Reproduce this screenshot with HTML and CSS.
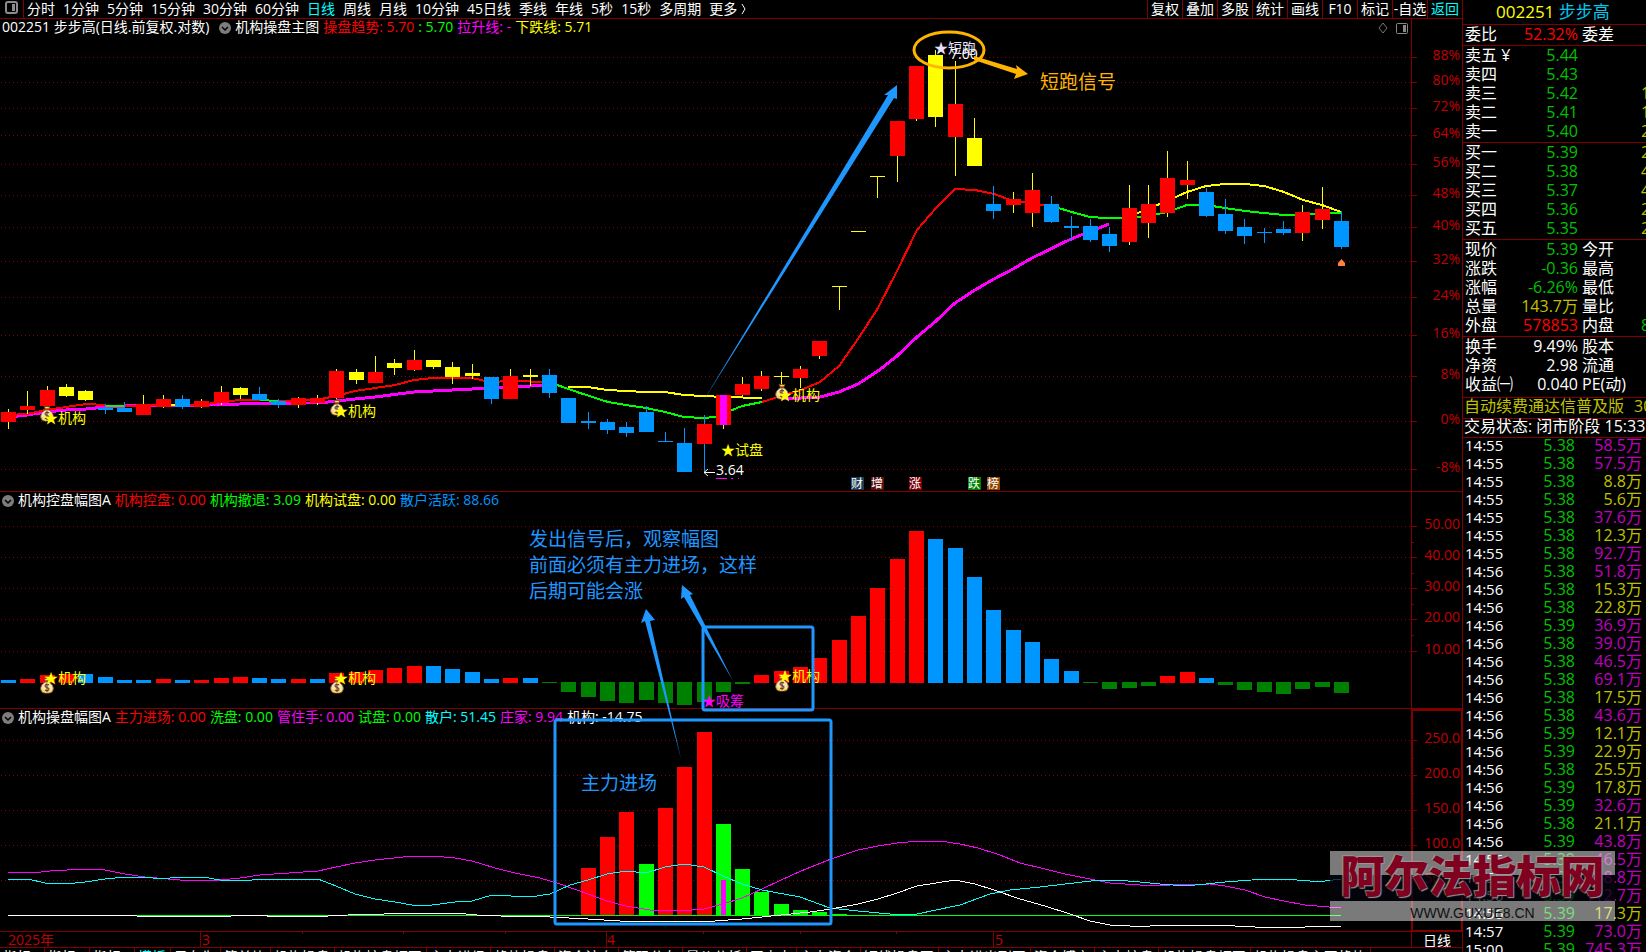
FILE: index.html
```
<!DOCTYPE html>
<html lang="zh-CN">
<head>
  <meta charset="UTF-8" />
  <meta name="viewport" content="width=device-width, initial-scale=1" />
  <title>002251 步步高 日线</title>
  <link rel="stylesheet" href="styles.css">
</head>
<body>
  <main class="left">
    <nav class="toolbar">
      <button type="button" class="layout-btn" aria-label="布局">
        <svg width="13" height="13" viewBox="0 0 13 13"><rect x="1" y="1" width="11" height="11" rx="2" fill="none" stroke="#8c8c8c" stroke-width="2"/><rect x="7" y="3" width="3" height="7" fill="#8c8c8c"/></svg>
      </button>
      <div class="periods">
        <button type="button">分时</button>
        <button type="button">1分钟</button>
        <button type="button">5分钟</button>
        <button type="button">15分钟</button>
        <button type="button">30分钟</button>
        <button type="button">60分钟</button>
        <button type="button" class="cyan">日线</button>
        <button type="button">周线</button>
        <button type="button">月线</button>
        <button type="button">10分钟</button>
        <button type="button">45日线</button>
        <button type="button">季线</button>
        <button type="button">年线</button>
        <button type="button">5秒</button>
        <button type="button">15秒</button>
        <button type="button">多周期</button>
        <button type="button" class="more">更多
          <svg width="6" height="12" viewBox="0 0 6 12"><path d="M1 1 L4 6 L1 11" fill="none" stroke="#fff"/></svg>
        </button>
      </div>
      <div class="tools">
        <button type="button">复权</button>
        <button type="button">叠加</button>
        <button type="button">多股</button>
        <button type="button">统计</button>
        <button type="button">画线</button>
        <button type="button">F10</button>
        <button type="button">标记</button>
        <button type="button">-自选</button>
        <button type="button" class="cyan">返回</button>
      </div>
    </nav>

    <div class="charts">
      <section class="panel">
        <div class="legend">
          <span>002251 步步高(日线.前复权.对数)</span>
          <svg class="chev first" viewBox="0 0 12 12"><circle cx="6" cy="6" r="6" fill="#7d7d7d"/><path d="M3 5 L6 8 L9 5" fill="none" stroke="#000" stroke-width="1.5"/></svg>
          <span>机构操盘主图</span>
          <span class="red">操盘趋势: 5.70</span>
          <span class="green">: 5.70</span>
          <span class="magenta">拉升线: -</span>
          <span class="yellow">下跌线: 5.71</span>
        </div>
        <svg class="plot" id="main" viewBox="0 37 1462 454"></svg>
      </section>

      <section class="panel">
        <div class="legend">
          <svg class="chev" viewBox="0 0 12 12"><circle cx="6" cy="6" r="6" fill="#7d7d7d"/><path d="M3 5 L6 8 L9 5" fill="none" stroke="#000" stroke-width="1.5"/></svg>
          <span>机构控盘幅图A</span>
          <span class="red">机构控盘: 0.00</span>
          <span class="green">机构撤退: 3.09</span>
          <span class="yellow">机构试盘: 0.00</span>
          <span class="blue">散户活跃: 88.66</span>
        </div>
        <svg class="plot" id="control" viewBox="0 510 1462 198"></svg>
      </section>

      <section class="panel">
        <div class="legend">
          <svg class="chev" viewBox="0 0 12 12"><circle cx="6" cy="6" r="6" fill="#7d7d7d"/><path d="M3 5 L6 8 L9 5" fill="none" stroke="#000" stroke-width="1.5"/></svg>
          <span>机构操盘幅图A</span>
          <span class="red">主力进场: 0.00</span>
          <span class="green">洗盘: 0.00</span>
          <span class="magenta">管住手: 0.00</span>
          <span class="green">试盘: 0.00</span>
          <span class="aqua">散户: 51.45</span>
          <span class="magenta">庄家: 9.94</span>
          <span>机构: -14.75</span>
        </div>
        <svg class="plot" id="operate" viewBox="0 727 1462 204"></svg>
      </section>

      <!-- drawings that cross the panels -->
      <svg class="overlay" viewBox="0 19 1462 913">
        <defs>
          <symbol id="bag" viewBox="0 0 14 17">
            <path d="M4 1 L6 2 L7 1 L8 2 L10 1 L9 4 H5 Z" fill="#ffe640" stroke="#6b3a20" stroke-width=".7"/>
            <path d="M5 5 H9 C12 7 14 10 13 13 C12 16 10 16 7 16 C4 16 2 16 1 13 C0 10 2 7 5 5 Z" fill="#f5e6b0" stroke="#8a5a3c"/>
            <path d="M2 12 C3 15 6 16 11 14" fill="none" stroke="#ffd830" stroke-width="1.5"/>
            <path d="M9 8 C8 7 5 7 5 9 C5 11 9 10 9 12 C9 14 6 14 5 13 M7 6 V15" fill="none" stroke="#6b3a30" stroke-width="1.1"/>
            <path d="M5 4 H9" stroke="#b04030" stroke-width="1.2"/>
          </symbol>
        </defs>
        <path class="frame" d="M1411.5 19 V932"/>
        <rect x="1412" y="710" width="50" height="221" fill="none" stroke="#800000" stroke-width="2"/>
        <path d="M1383 23 L1387 28 L1383 33 L1379 28 Z" fill="none" stroke="#777"/>
        <rect x="1396.500" y="23.500" width="11" height="10" rx="1" fill="none" stroke="#888"/>
        <rect x="1403" y="25" width="3" height="7" fill="#888"/>

        <use href="#bag" x="40" y="405" width="14" height="17"/>
        <use href="#bag" x="330" y="399" width="14" height="17"/>
        <use href="#bag" x="775" y="383" width="14" height="17"/>
        <use href="#bag" x="40" y="677" width="14" height="17"/>
        <use href="#bag" x="330" y="677" width="14" height="17"/>
        <use href="#bag" x="775" y="675" width="14" height="17"/>
        <g class="mark yellow">
          <text x="44" y="423">★机构</text>
          <text x="334" y="416">★机构</text>
          <text x="778" y="400">★机构</text>
          <text x="721" y="455">★试盘</text>
          <text x="44" y="683">★机构</text>
          <text x="334" y="683">★机构</text>
          <text x="778" y="681">★机构</text>
        </g>
        <text class="mark magenta" x="702" y="706">★吸筹</text>
        <text class="mark lilac" x="934" y="53">★短跑</text>
        <text class="mark white" x="950" y="59">7.00</text>
        <path d="M704 472.500 H715 M708 469 L704 472.500 L708 476" fill="none" stroke="#fff"/>
        <text class="mark white" x="716" y="475">3.64</text>
        <path d="M716 478.500 H727 M731 478.500 H733 M738 478.500 H739" stroke="#f0f"/>

        <ellipse cx="949" cy="50" rx="35" ry="18" fill="none" stroke="#ffb400" stroke-width="3"/>
        <path d="M974 56 L1017 69 L1016 65 L1028 74 L1014 79 L1016 74 L974 60 Z" fill="#ffb400"/>
        <text class="note orange" x="1040" y="89">短跑信号</text>

        <g fill="#1f97ff">
          <path d="M702 403 L888 95 L884 95 L897 85 L897 99 L894 98 Z"/>
          <path d="M733 681 L684 597 L681 599 L682 585 L693 594 L690 595 Z"/>
          <path d="M681 759 L645 621 L641 623 L646 609 L655 620 L650 621 Z"/>
        </g>
        <g fill="none" stroke="#1f97ff" stroke-width="3">
          <rect x="703" y="627" width="110" height="83" rx="2"/>
          <rect x="555" y="720" width="276" height="204" rx="2"/>
        </g>
        <g class="note sky">
          <text x="529" y="546">发出信号后，观察幅图</text>
          <text x="529" y="572">前面必须有主力进场，这样</text>
          <text x="529" y="598">后期可能会涨</text>
          <text x="581" y="790">主力进场</text>
        </g>
      </svg>
    </div>

    <svg class="dates" viewBox="0 932 1462 15">
      <path class="frame" d="M200.500 932 V947 M606.500 932 V947 M993.500 932 V947 M1411.500 932 V947 M302.500 932 V934 M403.500 932 V934 M505.500 932 V934 M703.500 932 V934 M800.500 932 V934 M896.500 932 V934"/>
      <g class="axis">
        <text x="8" y="945">2025年</text>
        <text x="202" y="945">3</text>
        <text x="607" y="945">4</text>
        <text x="995" y="945">5</text>
      </g>
      <text class="period" x="1423" y="946">日线</text>
    </svg>

    <nav class="tabs">
      <button type="button">指标A</button>
      <button type="button">指标B</button>
      <button type="button">指标C</button>
      <button type="button" class="cyan">模板</button>
      <button type="button">另存为</button>
      <button type="button">简单均</button>
      <button type="button">机构操盘</button>
      <button type="button">机构控盘幅图</button>
      <button type="button">主力进场</button>
      <button type="button">趋势操盘</button>
      <button type="button">资金流向</button>
      <button type="button">筹码分布</button>
      <button type="button">量价分析</button>
      <button type="button">买卖点</button>
      <button type="button">主力资金</button>
      <button type="button">短线操盘图</button>
      <button type="button">主力进出副图</button>
      <button type="button">资金博弈</button>
      <button type="button">主力控盘</button>
      <button type="button">机构操盘幅图</button>
      <button type="button">机构操盘主图趋势</button>
    </nav>
  </main>

  <aside class="side">
    <h1><span class="yellow">002251</span> <a href="#">步步高</a></h1>
    <table class="quote">
      <colgroup><col class="c1"><col class="c2"><col class="c3"><col class="c4"></colgroup>
      <tbody>
        <tr><th>委比</th><td class="up">52.32%</td><th>委差</th><td></td></tr>
      </tbody>
      <tbody>
        <tr><th>卖五 ¥</th><td>5.44</td><th></th><td></td></tr>
        <tr><th>卖四</th><td>5.43</td><th></th><td></td></tr>
        <tr><th>卖三</th><td>5.42</td><th></th><td class="gold">1</td></tr>
        <tr><th>卖二</th><td>5.41</td><th></th><td class="gold">1</td></tr>
        <tr><th>卖一</th><td>5.40</td><th></th><td class="gold">2</td></tr>
      </tbody>
      <tbody>
        <tr><th>买一</th><td>5.39</td><th></th><td class="gold">2</td></tr>
        <tr><th>买二</th><td>5.38</td><th></th><td class="gold">4</td></tr>
        <tr><th>买三</th><td>5.37</td><th></th><td class="gold">4</td></tr>
        <tr><th>买四</th><td>5.36</td><th></th><td class="gold">2</td></tr>
        <tr><th>买五</th><td>5.35</td><th></th><td class="gold">2</td></tr>
      </tbody>
      <tbody>
        <tr><th>现价</th><td>5.39</td><th>今开</th><td></td></tr>
        <tr><th>涨跌</th><td>-0.36</td><th>最高</th><td></td></tr>
        <tr><th>涨幅</th><td>-6.26%</td><th>最低</th><td></td></tr>
        <tr><th>总量</th><td class="gold">143.7万</td><th>量比</th><td></td></tr>
        <tr><th>外盘</th><td class="up">578853</td><th>内盘</th><td>8</td></tr>
      </tbody>
      <tbody class="last">
        <tr><th>换手</th><td class="flat">9.49%</td><th>股本</th><td></td></tr>
        <tr><th>净资</th><td class="flat">2.98</td><th>流通</th><td></td></tr>
        <tr><th>收益㈠</th><td class="flat">0.040</td><th>PE(动)</th><td></td></tr>
      </tbody>
    </table>
    <p class="notice gold"><span>自动续费通达信普及版</span><span>30</span></p>
    <p class="status">交易状态: 闭市阶段 15:33</p>
    <table class="ticks"><tbody id="ticks"></tbody></table>
  </aside>

  <div class="watermark">
    <strong>阿尔法指标网</strong>
    <span>WWW.GUXUE8.CN</span>
  </div>

  <script src="script.js"></script>
</body>
</html>
```

FILE: styles.css
```
body {
  margin: 0;
  height: 100vh;
  display: flex;
  overflow: hidden;
  position: relative;
  background: #000;
  color: #fff;
  font-family: "Open Sans", "Noto Sans CJK SC", sans-serif;
  font-size: 14px;
}
button {
  background: none;
  border: 0;
  padding: 0;
  color: inherit;
  font: inherit;
  white-space: nowrap;
  cursor: pointer;
}
.red { color: #f00; fill: #f00; }
.green { color: #0f0; fill: #0f0; }
.magenta { color: #f0f; fill: #f0f; }
.yellow { color: #ff0; fill: #ff0; }
.blue { color: #0096ff; }
.aqua, .cyan { color: #0ff; }
.gold { color: #c0c000; }

.left {
  flex: 1;
  min-width: 0;
  display: flex;
  flex-direction: column;
  overflow: hidden;
}
.toolbar {
  display: flex;
  height: 18px;
  line-height: 18px;
  border-bottom: 1px solid #800000;
  flex: none;
}
.layout-btn {
  width: 24px;
  border-right: 1px solid #800000;
  display: flex;
  justify-content: center;
  padding-top: 1px;
  box-sizing: border-box;
}
.periods {
  display: flex;
  gap: 8px;
  padding-left: 3px;
  flex: 1;
}
.more {
  display: flex;
  align-items: center;
  gap: 4px;
}
.tools {
  display: flex;
}
.tools button {
  width: 35px;
  border-left: 1px solid #800000;
  box-sizing: border-box;
}

.charts {
  position: relative;
  flex: none;
}
.panel {
  border-bottom: 1px solid #800000;
}
.legend {
  display: flex;
  gap: 4px;
  height: 18px;
  line-height: 16px;
  padding-left: 2px;
  white-space: nowrap;
}
.chev {
  width: 12px;
  height: 12px;
  margin-top: 3px;
}
.chev.first {
  margin-left: 6px;
}
.plot, .dates {
  display: block;
  width: 100%;
}
.overlay {
  position: absolute;
  top: 0;
  left: 0;
  width: 100%;
  pointer-events: none;
}
.frame {
  fill: none;
  stroke: #800000;
  shape-rendering: crispEdges;
}
.grid {
  fill: none;
  stroke: #8c0000;
  stroke-dasharray: 1 3;
  shape-rendering: crispEdges;
}
.crisp {
  shape-rendering: crispEdges;
}
.curve {
  fill: none;
  stroke-linejoin: round;
}
.axis {
  fill: #c00000;
  font-size: 14px;
}
.axis.right {
  text-anchor: end;
}
.mark {
  font-size: 14px;
}
.tag {
  font-size: 12px;
  fill: #fff;
  text-anchor: middle;
}
.white, .period { fill: #fff; }
.lilac { fill: #e6e0ff; }
.note { font-size: 19px; }
.orange { fill: #ffb400; }
.sky { fill: #1f97ff; }
.period { font-size: 14px; }

.dates {
  flex: none;
  border-bottom: 1px solid #800000;
}
.tabs {
  display: flex;
  height: 18px;
  line-height: 16px;
  flex: none;
}
.tabs button {
  padding: 0 4px 0 3px;
  border-right: 1px solid #800000;
}

.side {
  width: 183px;
  flex: none;
  overflow: hidden;
  border-left: 1px solid #800000;
  font-size: 16px;
}
.side h1 {
  margin: 0;
  height: 24px;
  line-height: 24px;
  padding-left: 33px;
  font-size: 17px;
  font-weight: normal;
  border-bottom: 1px solid #800000;
  white-space: nowrap;
}
.side a {
  color: #00c8f0;
  text-decoration: none;
}
table {
  border-collapse: separate;
  border-spacing: 0;
  table-layout: fixed;
}
th, td {
  padding: 0;
  font-weight: normal;
  white-space: nowrap;
}
.quote {
  width: 240px;
}
.c1 { width: 51px; }
.c2 { width: 64px; }
.c3 { width: 63px; }
.c4 { width: 62px; }
.quote th {
  text-align: left;
  padding-left: 2px;
  height: 19px;
  line-height: 19px;
}
.quote th:nth-child(3) {
  padding-left: 4px;
}
.quote td {
  color: #00c000;
  line-height: 19px;
  text-align: right;
}
.quote td:last-child {
  text-align: left;
}
.quote tr:last-child th,
.quote tr:last-child td {
  padding-bottom: 1px;
  border-bottom: 1px solid #800000;
}
.quote tbody:first-child tr:last-child th,
.quote tbody:first-child tr:last-child td {
  padding-bottom: 0;
}
.quote tbody.last tr:last-child th,
.quote tbody.last tr:last-child td {
  padding-bottom: 3px;
}
.quote .up { color: #f00; }
.quote .gold { color: #c0c000; }
.quote .flat { color: #fff; }
.notice, .status {
  margin: 0;
  height: 20px;
  line-height: 17px;
  padding-left: 1px;
  border-bottom: 1px solid #800000;
  white-space: nowrap;
  display: flex;
  gap: 10px;
}
.status {
  height: 18px;
  line-height: 15px;
}
.ticks {
  width: 179px;
}
.ticks td {
  height: 18px;
  line-height: 15px;
  vertical-align: top;
  text-align: right;
}
.ticks td:first-child {
  width: 49px;
  font-size: 15px;
  text-align: left;
  padding-left: 2px;
}
.ticks td:nth-child(2) {
  width: 61px;
  color: #00c000;
}
.ticks .big { color: #c000c0; }
.ticks .small { color: #c0c000; }

.watermark {
  position: absolute;
  right: 31px;
  bottom: 31px;
  width: 285px;
  height: 70px;
  background: linear-gradient(rgba(255,255,255,0.48) 24px, rgba(4,4,14,0.75) 24px, rgba(4,4,14,0.75) 50px, rgba(255,255,255,0.48) 50px);
  display: flex;
  flex-direction: column;
  align-items: center;
}
.watermark strong {
  font-family: "Noto Sans CJK SC", sans-serif;
  font-size: 44px;
  line-height: 46px;
  font-weight: 900;
  color: #80001f;
  text-shadow: 1px 1px 1px #999, -1px -1px 1px #999;
}
.watermark span {
  font-family: "Liberation Sans", sans-serif;
  font-size: 14px;
  line-height: 32px;
  color: #111;
}
```

FILE: script.js
```
const NS = 'http://www.w3.org/2000/svg';
const RED = '#f00', YEL = '#ff0', BLU = '#0096ff', GRN = '#0f0', DGR = '#008000', MAG = '#f0f';
const colors = { r: RED, y: YEL, b: BLU, g: GRN, d: DGR };

function add(parent, tag, attrs, text) {
  const el = document.createElementNS(NS, tag);
  for (const key in attrs) el.setAttribute(key, attrs[key]);
  if (text) el.textContent = text;
  parent.appendChild(el);
  return el;
}

// centre of the n-th trading day
const cx = i => Math.round(8 + i * 19.32);

function grid(svg, rows) {
  rows.forEach(([y, label]) => {
    add(svg, 'path', { class: 'grid', d: `M1 ${y}.5 H1411` });
    add(svg, 'path', { class: 'frame', d: `M1411 ${y}.5 H1417` });
    add(svg, 'text', { class: 'axis right', x: 1460, y: y + 3 }, label);
  });
}

function halfTicks(svg, ys) {
  ys.forEach(y => add(svg, 'path', { class: 'frame', d: `M1411 ${y}.5 H1414` }));
}

function curve(svg, color, width, points) {
  add(svg, 'polyline', { class: 'curve crisp', stroke: color, 'stroke-width': width, points });
}

const main = document.getElementById('main');
grid(main, [
  [57, '88%'], [82, '80%'], [108, '72%'], [135, '64%'], [164, '56%'], [195, '48%'], [227, '40%'],
  [261, '32%'], [297, '24%'], [335, '16%'], [376, '8%'], [421, '0%'], [469, '-8%']
]);

curve(main, YEL, 2, '568,387 588,387 607,390 646,392 665,392 684,395 704,396 723,397 762,398');
curve(main, YEL, 2, '1129,218 1140,212 1167,201 1187,192 1206,186 1225,184 1245,184 1264,186 1284,192 1303,200 1322,205 1341,212');
curve(main, MAG, 3, '8,417 27,415 46,412 66,410 86,409 105,407 124,406 143,405 200,405 240,404 300,403 320,403 336,401 375,397 414,392 433,391 472,389 510,387 550,385');
curve(main, MAG, 3, '781,398 801,398 820,397 839,392 858,384 878,371 897,356 917,337 936,321 955,303 975,290 994,279 1013,269 1032,258 1071,239 1109,224');
curve(main, RED, 2, '8,415 27,414 46,410 66,407 86,404 105,405');
curve(main, GRN, 2, '105,406 124,406');
curve(main, RED, 2, '124,406 162,405');
curve(main, YEL, 2, '162,405 178,405');
curve(main, RED, 2, '178,405 200,405 220,402 240,400 260,400');
curve(main, GRN, 2, '260,400 278,401');
curve(main, RED, 2, '278,401 316,400 336,396 355,391 375,388 395,385 414,380 433,378 472,378 490,382 510,381 549,382');
curve(main, GRN, 2, '549,383 557,385 580,393 608,402 626,405 646,408 665,412 684,417 704,418 715,417 742,406 762,402');
curve(main, RED, 2, '762,402 781,396 801,390 820,382 839,366 858,339 878,308 897,271 917,230 936,208 955,189 975,190 994,194 1013,201 1032,203 1052,207');
curve(main, GRN, 2, '1052,206 1075,213 1090,217 1105,218 1129,218 1148,216 1167,212 1187,205 1206,205 1225,208 1245,211 1264,213 1284,215 1300,215 1322,213 1341,213');

// colour, body top, body bottom, high, low
const candles = [
  ['r', 412, 422, 409, 429], ['r', 406, 410, 391, 414], ['r', 390, 406, 386, 406], ['y', 387, 396, 384, 397],
  ['y', 391, 400, 390, 401], ['b', 408, 410, 404, 414], ['b', 408, 412, 402, 412], ['r', 404, 415, 395, 415],
  ['r', 399, 407, 395, 408], ['b', 399, 407, 395, 409], ['r', 401, 407, 399, 408], ['r', 392, 403, 386, 405],
  ['y', 388, 395, 387, 399], ['b', 394, 400, 387, 400], ['b', 401, 405, 399, 408], ['r', 398, 405, 397, 408],
  ['r', 398, 403, 395, 405], ['r', 371, 398, 369, 399], ['y', 372, 380, 369, 384], ['r', 372, 383, 356, 383],
  ['y', 363, 368, 359, 375], ['r', 360, 370, 350, 371], ['y', 360, 367, 360, 369], ['y', 367, 377, 362, 384],
  ['y', 373, 376, 364, 379], ['b', 377, 399, 377, 404], ['r', 376, 399, 369, 399], ['y', 375, 377, 369, 386],
  ['b', 375, 393, 369, 398], ['b', 398, 423, 398, 423], ['b', 421, 423, 412, 429], ['b', 422, 430, 419, 434],
  ['b', 427, 433, 422, 437], ['b', 412, 432, 406, 432], ['b', 441, 442, 432, 442], ['b', 443, 472, 428, 472],
  ['r', 424, 444, 415, 472, 'b'], ['r', 395, 425, 395, 429], ['r', 384, 395, 377, 397], ['r', 376, 389, 371, 391],
  ['y', 376, 377, 372, 385], ['r', 369, 378, 366, 388], ['r', 341, 356, 341, 359], ['y', 286, 287, 286, 310],
  ['y', 231, 232, 231, 232], ['y', 176, 177, 176, 198], ['r', 121, 156, 121, 182], ['r', 66, 119, 66, 121],
  ['y', 55, 117, 50, 127], ['r', 104, 137, 61, 176], ['y', 138, 166, 118, 166], ['b', 204, 211, 186, 219],
  ['r', 199, 205, 192, 213], ['r', 190, 213, 173, 227], ['b', 204, 222, 196, 223], ['b', 226, 228, 216, 241],
  ['b', 226, 240, 219, 242], ['b', 234, 246, 227, 252], ['r', 208, 242, 185, 245], ['r', 204, 223, 185, 238],
  ['r', 178, 213, 151, 217], ['r', 180, 185, 161, 199], ['b', 192, 216, 188, 217], ['b', 214, 231, 199, 234],
  ['b', 227, 236, 219, 244], ['b', 232, 233, 228, 243], ['b', 229, 233, 221, 235], ['r', 212, 233, 205, 241],
  ['r', 209, 220, 187, 229], ['b', 221, 247, 211, 249]
];
candles.forEach(([c, top, bottom, high, low, wick], i) => {
  const x = cx(i);
  const wickColor = wick ? colors[wick] : (c === 'b' ? BLU : YEL);
  add(main, 'rect', { x: x, y: high, width: 1, height: low - high, fill: wickColor });
  add(main, 'rect', { x: x - 7, y: top, width: 15, height: bottom - top, fill: colors[c] });
});
add(main, 'rect', { x: cx(37) - 3, y: 395, width: 7, height: 30, fill: MAG });
add(main, 'path', { d: 'M1341.500 259 L1345 263 V266 H1338 V263 Z', fill: '#ff8040' });

[[857, '财', '#1d3d55'], [877, '增', '#5a1010'], [915, '涨', '#7a0008'], [974, '跌', '#008000'], [993, '榜', '#8b4500']]
  .forEach(([x, name, bg]) => {
    add(main, 'rect', { x: x - 6, y: 477, width: 13, height: 13, fill: bg });
    add(main, 'text', { class: 'tag', x: x, y: 488 }, name);
  });

const control = document.getElementById('control');
grid(control, [[526, '50.00'], [557, '40.00'], [588, '30.00'], [619, '20.00'], [651, '10.00']]);
halfTicks(control, [542, 573, 604, 635]);

// colour and the end of each bar
const force = [
  'b680', 'r679', 'r675', 'r674', 'b674', 'b677', 'b680', 'b680', 'r679', 'b680', 'r680', 'r678', 'r677', 'b678',
  'b679', 'r679', 'b679', 'r673', 'r672', 'r670', 'r668', 'r666', 'b666', 'b669', 'b672', 'b679', 'r678', 'b678',
  'd683', 'd692', 'd697', 'd701', 'd703', 'd700', 'd703', 'd705', 'd702', 'd692', 'd684', 'r675', 'r671', 'r667',
  'r658', 'r640', 'r616', 'r588', 'r559', 'r531', 'b539', 'b548', 'b577', 'b610', 'b630', 'b642', 'b659', 'b671',
  'd683', 'd689', 'd688', 'd686', 'r676', 'r672', 'b678', 'd685', 'd690', 'd692', 'd694', 'd689', 'd687', 'd693'
];
force.forEach((bar, i) => {
  const end = Number(bar.slice(1));
  const down = bar[0] === 'd';
  add(control, 'rect', {
    x: cx(i) - 7, y: down ? 682 : end, width: 15,
    height: down ? end - 682 : 683 - end, fill: colors[bar[0]]
  });
});

const operate = document.getElementById('operate');
grid(operate, [[740, '250.0'], [775, '200.0'], [810, '150.0'], [845, '100.0'], [880, '50.00']]);
halfTicks(operate, [758, 793, 828, 863, 898]);

['r868', 'r837', 'r812', 'g864', 'r808', 'r767', 'r732', 'g824', 'g869', 'g892', 'g904', 'g910', 'g912', 'g914']
  .forEach((bar, n) => {
    const top = Number(bar.slice(1));
    add(operate, 'rect', { x: cx(n + 30) - 7, y: top, width: 15, height: 915 - top, fill: colors[bar[0]] });
  });
add(operate, 'rect', { x: cx(37) - 2, y: 880, width: 5, height: 35, fill: MAG });

curve(operate, GRN, 1, '8,915.5 1341,915.5');
curve(operate, MAG, 1, '8,872 33,873 50,871 85,869 105,870 125,874 145,877 180,880 200,881 220,880 240,878 260,875 318,871 336,867 355,863 375,860 403,857 432,856 455,858 472,861 495,868 515,873 540,878 560,884 588,894 607,901 626,906 650,910 680,911 704,909 723,904 742,898 762,889 781,880 801,871 831,859 858,850 878,846 897,843 920,841 940,841 960,844 978,848 1000,855 1020,863 1045,869 1065,874 1095,880 1110,883 1140,885 1170,885 1210,884 1225,886 1245,890 1265,897 1284,901 1305,905 1341,908');
curve(operate, '#0ff', 1, '8,879 28,879 45,883 65,884 85,882 105,879 125,877 145,877 160,879 180,877 203,877 220,880 240,881 265,879 318,879 336,886 355,894 375,899 395,902 412,905 432,905 455,902 472,901 492,895 530,897 550,894 570,885 588,880 607,874 626,871 646,873 665,867 684,864 704,867 723,876 742,884 762,890 800,897 830,908 858,911 890,914 917,914 936,910 960,905 990,894 1010,890 1040,887 1065,884 1100,880 1115,880 1140,882 1160,884 1185,886 1206,884 1225,882 1265,879 1284,879 1310,881 1325,881 1341,879');
curve(operate, '#fff', 1, '8,915.5 134,915.5 140,916.5 230,916.5 232,915.5 265,915.5 270,916.5 326,916.5 330,915.5 366,914.5 403,913.5 460,913.5 482,915.5 520,916.5 550,917 588,919 620,921 715,921 742,919 762,917 781,915 810,912 831,909 858,904 878,899 897,893 917,886 936,883 955,880 975,884 994,890 1020,899 1045,906 1070,914 1090,921 1110,925 1130,926 1150,926 1175,925 1215,925 1255,927 1305,927 1320,926 1341,926');

// time, price, volume (values in purple are the large trades)
const ticks = [
  ['14:55', '5.38', '58.5', 1], ['14:55', '5.38', '57.5', 1], ['14:55', '5.38', '8.8', 0], ['14:55', '5.38', '5.6', 0],
  ['14:55', '5.38', '37.6', 1], ['14:55', '5.38', '12.3', 0], ['14:55', '5.38', '92.7', 1], ['14:56', '5.38', '51.8', 1],
  ['14:56', '5.38', '15.3', 0], ['14:56', '5.38', '22.8', 0], ['14:56', '5.39', '36.9', 1], ['14:56', '5.38', '39.0', 1],
  ['14:56', '5.38', '46.5', 1], ['14:56', '5.38', '69.1', 1], ['14:56', '5.38', '17.5', 0], ['14:56', '5.38', '43.6', 1],
  ['14:56', '5.39', '12.1', 0], ['14:56', '5.39', '22.9', 0], ['14:56', '5.38', '25.5', 0], ['14:56', '5.39', '17.8', 0],
  ['14:56', '5.39', '32.6', 1], ['14:56', '5.38', '21.1', 0], ['14:56', '5.39', '43.8', 1], ['14:56', '5.39', '46.5', 1],
  ['14:56', '5.39', '48.8', 1], ['14:56', '5.39', '112.7', 1], ['14:56', '5.39', '17.3', 0], ['14:57', '5.39', '73.0', 1],
  ['15:00', '5.39', '745.3', 1]
];
document.getElementById('ticks').innerHTML = ticks.map(([time, price, vol, big]) => `
  <tr><td>${time}</td><td>${price}</td><td class="${big ? 'big' : 'small'}">${vol}万</td></tr>`).join('');
```
